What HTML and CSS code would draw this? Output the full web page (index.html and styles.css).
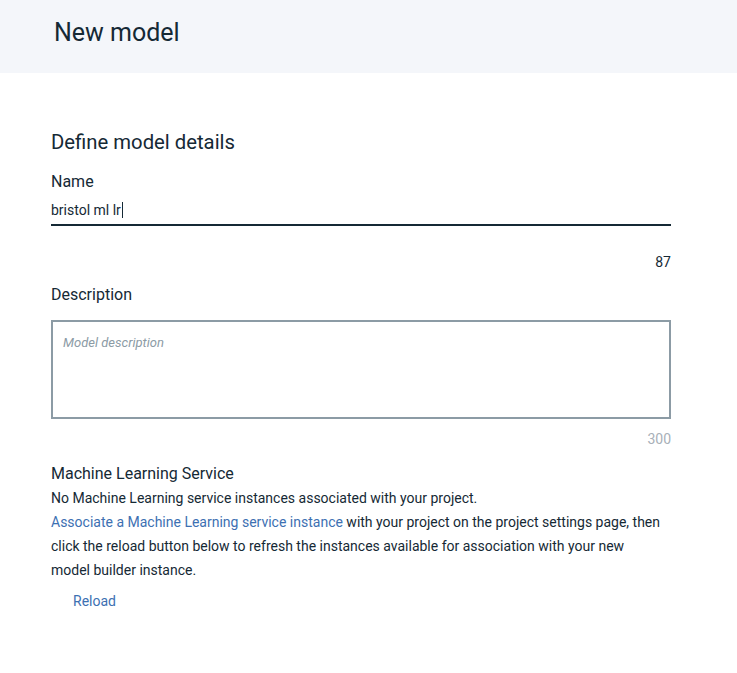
FILE: index.html
```html
<!DOCTYPE html>
<html>
<head>
<meta charset="utf-8">
<link rel="stylesheet" href="styles.css">
</head>
<body>
<header class="page-header">
  <h1 class="page-title">New model</h1>
</header>
<main class="content">
  <h2 class="section-title">Define model details</h2>
  <div class="field">
    <label class="label">Name</label>
    <div class="input-line"><span class="input-value">bristol ml lr</span><span class="caret"></span></div>
    <div class="counter">87</div>
  </div>
  <div class="field">
    <label class="label">Description</label>
    <div class="textarea"><span class="placeholder">Model description</span></div>
    <div class="counter muted">300</div>
  </div>
  <div class="service">
    <h3 class="label">Machine Learning Service</h3>
    <p class="text">No Machine Learning service instances associated with your project.<br><a class="link" href="#">Associate a Machine Learning service instance</a> with your project on the project settings page, then click the reload button below to refresh the instances available for association with your new model builder instance.</p>
    <button class="reload">Reload</button>
  </div>
</main>
</body>
</html>
```
FILE: styles.css
```css
* { box-sizing: border-box; }
html, body { margin: 0; padding: 0; background: #fff; }
body {
  font-family: Roboto, "Noto Sans", sans-serif;
  color: #152935;
}
.page-header {
  background: #f4f6fa;
  height: 73px;
  padding: 0 0 0 54px;
  display: flex;
  align-items: center;
}
.page-title {
  margin: 0;
  font-size: 25px;
  font-weight: 400;
  line-height: 1;
  position: relative;
  top: -4px;
}
.content {
  width: 620px;
  margin-left: 51px;
  padding-top: 54px;
}
.section-title {
  margin: 0;
  font-size: 20.3px;
  font-weight: 400;
  line-height: 30px;
}
.label {
  display: block;
  margin: 0;
  font-size: 16px;
  font-weight: 400;
  line-height: 24px;
}
.field { margin-top: 13px; }
.field + .field { margin-top: 11px; }
.input-line {
  display: flex;
  align-items: center;
  height: 32px;
  padding-top: 1px;
  border-bottom: 2px solid #152935;
  font-size: 14px;
}
.caret {
  width: 1px;
  height: 16px;
  background: #152935;
  margin-left: 1px;
}
.counter {
  text-align: right;
  font-size: 14px;
  line-height: 20px;
  margin-top: 26px;
}
.counter.muted { color: #a8b0b8; margin-top: 10px; }
.textarea {
  margin-top: 13px;
  height: 99px;
  border: 2px solid #8c9ba5;
  padding: 10px 10px;
}
.placeholder {
  font-style: italic;
  font-size: 13px;
  color: #8c9ba5;
}
.service { margin-top: 13px; }
.text {
  margin: 0;
  max-width: 612px;
  font-size: 14px;
  line-height: 24px;
}
.link { color: #3d70b2; text-decoration: none; }
.reload {
  margin: 9px 0 0 22px;
  padding: 0;
  border: 0;
  background: none;
  color: #3d70b2;
  font-family: inherit;
  font-size: 14px;
  line-height: 20px;
}
```
